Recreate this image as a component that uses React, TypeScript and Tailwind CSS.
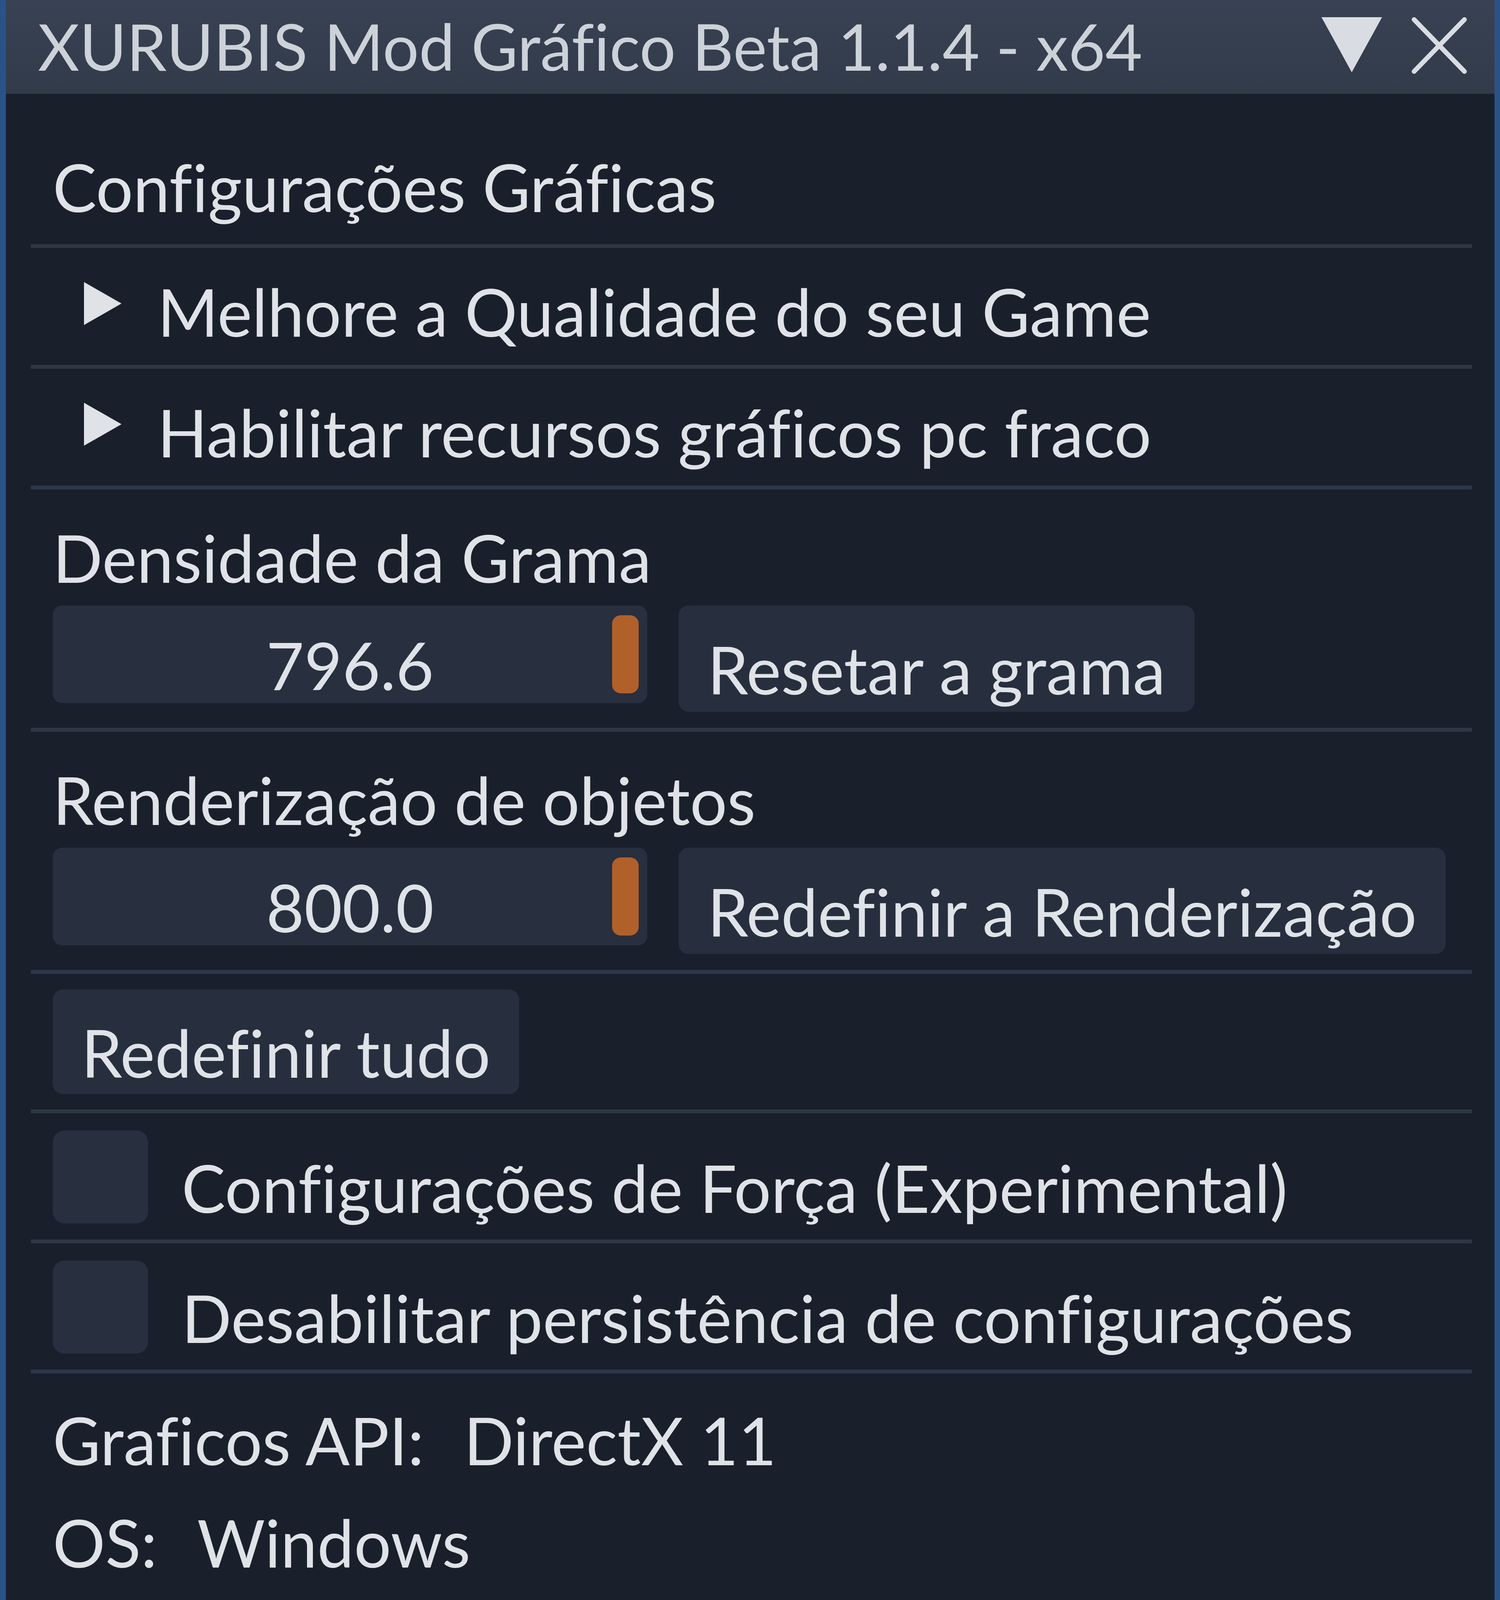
import React from 'react';

const FONT = { fontFamily: 'Lato, "Open Sans", sans-serif' };

function Sep() {
    return <div className="h-[10px] ml-[64px] mr-[58px] bg-[#2e3745]" />;
}

function TreeNode({ label }: { label: string }) {
    return (
        <div className="h-[299px] pt-[72px]">
            <div className="flex items-center h-[180px] pl-[200px]">
                <svg viewBox="0 0 96 110" className="w-[96px] h-[110px] mb-[40px]">
                    <polygon points="0,0 96,55 0,110" fill="#dfe3e8" />
                </svg>
                <span className="ml-[92px] text-[168px] leading-[180px] text-[#dfe3e8]">{label}</span>
            </div>
        </div>
    );
}

function SliderRow({ label, value, button }: { label: string; value: string; button: string }) {
    return (
        <div className="h-[610px] pt-[84px] pl-[120px]">
            <div className="text-[168px] leading-[180px] text-[#dfe3e8]">{label}</div>
            <div className="flex items-start gap-[80px] mt-[33px]">
                <div className="relative w-[1522px] h-[250px] rounded-[24px] bg-[#282f3e] flex items-center justify-center pt-[54px]">
                    <span className="text-[168px] leading-[180px] text-[#dfe3e8]">{value}</span>
                    <div className="absolute right-[22px] top-[25px] w-[68px] h-[200px] rounded-[22px] bg-[#b2602a]" />
                </div>
                <button className="h-[272px] px-[74px] pt-[54px] rounded-[26px] bg-[#272e3d] flex items-center text-[168px] leading-[180px] text-[#dfe3e8]">
                    {button}
                </button>
            </div>
        </div>
    );
}

function CheckRow({ label }: { label: string }) {
    return (
        <div className="h-[323px] pt-[44px] pl-[120px] flex items-start">
            <div className="w-[244px] h-[238px] rounded-[30px] bg-[#282f3e]" />
            <div className="h-[238px] pt-[54px] flex items-center ml-[86px]">
                <span className="text-[168px] leading-[180px] text-[#dfe3e8]">{label}</span>
            </div>
        </div>
    );
}

function Info({ label, value }: { label: string; value: string }) {
    return (
        <div className="flex items-center h-[262px] text-[168px] leading-[180px] text-[#dfe3e8]">
            <span>{label}</span>
            <span className="ml-[102px]">{value}</span>
        </div>
    );
}

export default function App() {
    return (
        <div
            className="w-[3840px] h-[4935px] bg-[#2a5288] pl-[15px] pr-[14px] overflow-hidden [font-variant-ligatures:none]"
            style={FONT}
        >
            <div className="h-full flex flex-col bg-[#19202b]">
                {/* title bar */}
                <div className="h-[240px] shrink-0 flex items-center justify-between bg-gradient-to-b from-[#384253] to-[#323b4a] pl-[82px] pr-[71px]">
                    <span className="text-[164px] leading-[180px] text-[#cdd2d9] -mt-[4px]">XURUBIS Mod Gráfico Beta 1.1.4 - x64</span>
                    <div className="flex items-start gap-[76px] pb-[8px]">
                        <svg viewBox="0 0 155 141" className="w-[155px] h-[141px]">
                            <polygon points="0,0 155,0 77.5,141" fill="#d9dde3" />
                        </svg>
                        <svg viewBox="0 0 141 145" className="w-[141px] h-[145px]">
                            <path d="M6 6 L135 139 M135 6 L6 139" stroke="#d9dde3" strokeWidth="12" strokeLinecap="round" />
                        </svg>
                    </div>
                </div>

                {/* heading */}
                <div className="h-[385px] shrink-0 pt-[148px] pl-[120px]">
                    <div className="text-[168px] leading-[180px] text-[#dfe3e8]">Configurações Gráficas</div>
                </div>
                <Sep />
                <TreeNode label="Melhore a Qualidade do seu Game" />
                <Sep />
                <TreeNode label="Habilitar recursos gráficos pc fraco" />
                <Sep />
                <SliderRow label="Densidade da Grama" value="796.6" button="Resetar a grama" />
                <Sep />
                <SliderRow label="Renderização de objetos" value="800.0" button="Redefinir a Renderização" />
                <Sep />
                <div className="h-[347px] pt-[40px] pl-[120px] flex items-start">
                    <button className="h-[268px] px-[73px] pt-[54px] rounded-[26px] bg-[#272e3d] flex items-center text-[168px] leading-[180px] text-[#dfe3e8]">
                        Redefinir tudo
                    </button>
                </div>
                <Sep />
                <CheckRow label="Configurações de Força (Experimental)" />
                <Sep />
                <CheckRow label="Desabilitar persistência de configurações" />
                <Sep />
                <div className="pt-[39px] pl-[120px] flex flex-col">
                    <Info label="Graficos API:" value="DirectX 11" />
                    <Info label="OS:" value="Windows" />
                    <Info label="FPS:" value="59" />
                    <Info label="Drawcalls:" value="3263" />
                    <Info label="Polycount:" value="8059597" />
                </div>
            </div>
        </div>
    );
}
